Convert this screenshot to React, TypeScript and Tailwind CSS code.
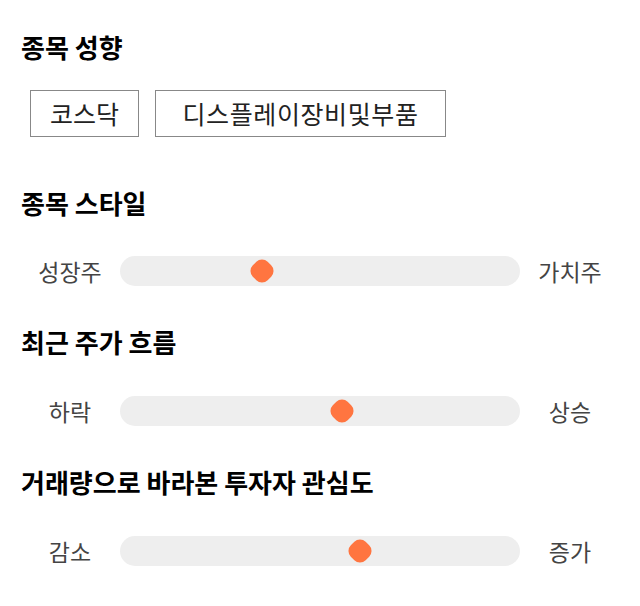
const font = { fontFamily: '"Noto Sans CJK KR", "Noto Sans", sans-serif' }

interface SliderRowProps {
  left: string
  right: string
  value: number
}

function SliderRow({ left, right, value }: SliderRowProps) {
  return (
    <div className="flex h-[30px] items-center">
      <span className="w-[100px] text-center text-[23px] leading-[30px] text-[#444]">{left}</span>
      <div className="relative h-[30px] flex-1 rounded-full bg-[#eeeeee]">
        <div
          className="absolute top-1/2 h-[21px] w-[21px] -translate-x-1/2 -translate-y-1/2 rotate-45 rounded-[8px] bg-[#ff7540]"
          style={{ left: `${value}%` }}
        />
      </div>
      <span className="w-[100px] text-center text-[23px] leading-[30px] text-[#444]">{right}</span>
    </div>
  )
}

function Title({ children }: { children: string }) {
  return <h2 className="pl-px text-[26px] font-bold leading-[28px] text-black">{children}</h2>
}

export default function App() {
  return (
    <div className="h-[606px] w-[640px] bg-white px-5 pt-[33px]" style={font}>
      <Title>종목 성향</Title>
      <div className="ml-[10px] mt-[29px] flex gap-4">
        <span className="flex h-[47px] w-[109px] items-center justify-center border border-[#888] text-[25px] text-[#222]">코스닥</span>
        <span className="flex h-[47px] w-[291px] items-center justify-center border border-[#888] text-[25px] tracking-[0.6px] text-[#222]">디스플레이장비및부품</span>
      </div>

      <div className="mt-[52px]">
        <Title>종목 스타일</Title>
      </div>
      <div className="mt-[39px]">
        <SliderRow left="성장주" right="가치주" value={35.5} />
      </div>

      <div className="mt-[42px]">
        <Title>최근 주가 흐름</Title>
      </div>
      <div className="mt-[40px]">
        <SliderRow left="하락" right="상승" value={55.5} />
      </div>

      <div className="mt-[42px]">
        <Title>거래량으로 바라본 투자자 관심도</Title>
      </div>
      <div className="mt-[40px]">
        <SliderRow left="감소" right="증가" value={60} />
      </div>
    </div>
  )
}
